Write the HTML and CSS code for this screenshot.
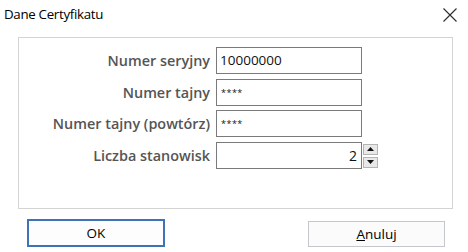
FILE: index.html
```
<!DOCTYPE html>
<html lang="pl">
<head>
<meta charset="utf-8">
<title>Dane Certyfikatu</title>
<link rel="stylesheet" href="styles.css">
</head>
<body>
<div class="dialog">
  <div class="titlebar">
    <span class="title">Dane Certyfikatu</span>
    <svg class="close" width="14" height="14" viewBox="0 0 14 14"><path d="M0.5 0.5 L13.5 13.5 M13.5 0.5 L0.5 13.5" stroke="#2b2b2b" stroke-width="1.1" fill="none"/></svg>
  </div>
  <div class="panel">
    <div class="form">
      <label class="label">Numer seryjny</label>
      <div class="field">10000000</div>
      <span></span>
      <label class="label">Numer tajny</label>
      <div class="field pw">****</div>
      <span></span>
      <label class="label">Numer tajny (powtórz)</label>
      <div class="field pw">****</div>
      <span></span>
      <label class="label">Liczba stanowisk</label>
      <div class="field num">2</div>
      <div class="spin">
        <div class="spin-btn"><svg width="7" height="4" viewBox="0 0 7 4"><path d="M0 4 L3.5 0 L7 4 Z" fill="#111"/></svg></div>
        <div class="spin-btn"><svg width="7" height="4" viewBox="0 0 7 4"><path d="M0 0 L3.5 4 L7 0 Z" fill="#111"/></svg></div>
      </div>
    </div>
  </div>
  <div class="buttons">
    <div class="btn default">OK</div>
    <div class="btn"><u>A</u>nuluj</div>
  </div>
</div>
</body>
</html>
```
FILE: styles.css
```
html, body {
  margin: 0;
  padding: 0;
  background: #ffffff;
}
body {
  font-family: "Open Sans", "Noto Sans", sans-serif;
  color: #000;
  width: 468px;
  height: 252px;
  overflow: hidden;
}
.dialog {
  display: flex;
  flex-direction: column;
}
.titlebar {
  height: 29px;
  display: flex;
  align-items: center;
  justify-content: space-between;
  padding: 0 11px 0 4px;
}
.title {
  font-size: 13.3px;
  letter-spacing: -0.3px;
  margin-top: -1px;
}
.close {
  display: block;
  margin-top: 1px;
}
.panel {
  margin: 8px 15px 0 18px;
  height: 161px;
  border: 1px solid #d4d4d4;
  padding-top: 9px;
  box-sizing: content-box;
}
.form {
  display: grid;
  grid-template-columns: 192px 146px 16px;
  column-gap: 5px;
  row-gap: 4.5px;
}
.form .spin {
  margin-left: -4px;
}
.label {
  text-align: right;
  font-size: 14.4px;
  font-weight: 600;
  color: #555555;
  line-height: 27px;
  padding-right: 1px;
  letter-spacing: 0;
}
.field {
  height: 27px;
  box-sizing: border-box;
  border: 1px solid #7a7a7a;
  font-size: 13.5px;
  line-height: 25px;
  padding: 0 3px;
  color: #111;
}
.field.pw {
  font-size: 9px;
  letter-spacing: 0.5px;
  line-height: 26px;
  padding-left: 4px;
}
.field.num {
  text-align: right;
  padding-right: 4px;
  font-size: 14px;
}
.spin {
  display: flex;
  flex-direction: column;
  gap: 2px;
  padding-top: 2px;
}
.spin-btn {
  width: 15px;
  height: 11px;
  box-sizing: border-box;
  background: #e8e8e8;
  border: 1px solid #b4b4b4;
  display: flex;
  align-items: center;
  justify-content: center;
}
.buttons {
  display: flex;
  justify-content: space-between;
  margin: 10px 23px 0 27px;
}
.btn {
  width: 137px;
  height: 26px;
  box-sizing: border-box;
  border: 1px solid #c4c8cc;
  background: #fbfbfb;
  font-size: 13.5px;
  display: flex;
  align-items: center;
  justify-content: center;
  margin-top: 2px;
}
.btn.default {
  width: 138px;
  height: 28px;
  margin-top: 0;
  border: 2px solid #3f73b8;
  background: #fdfdfd;
}
```
